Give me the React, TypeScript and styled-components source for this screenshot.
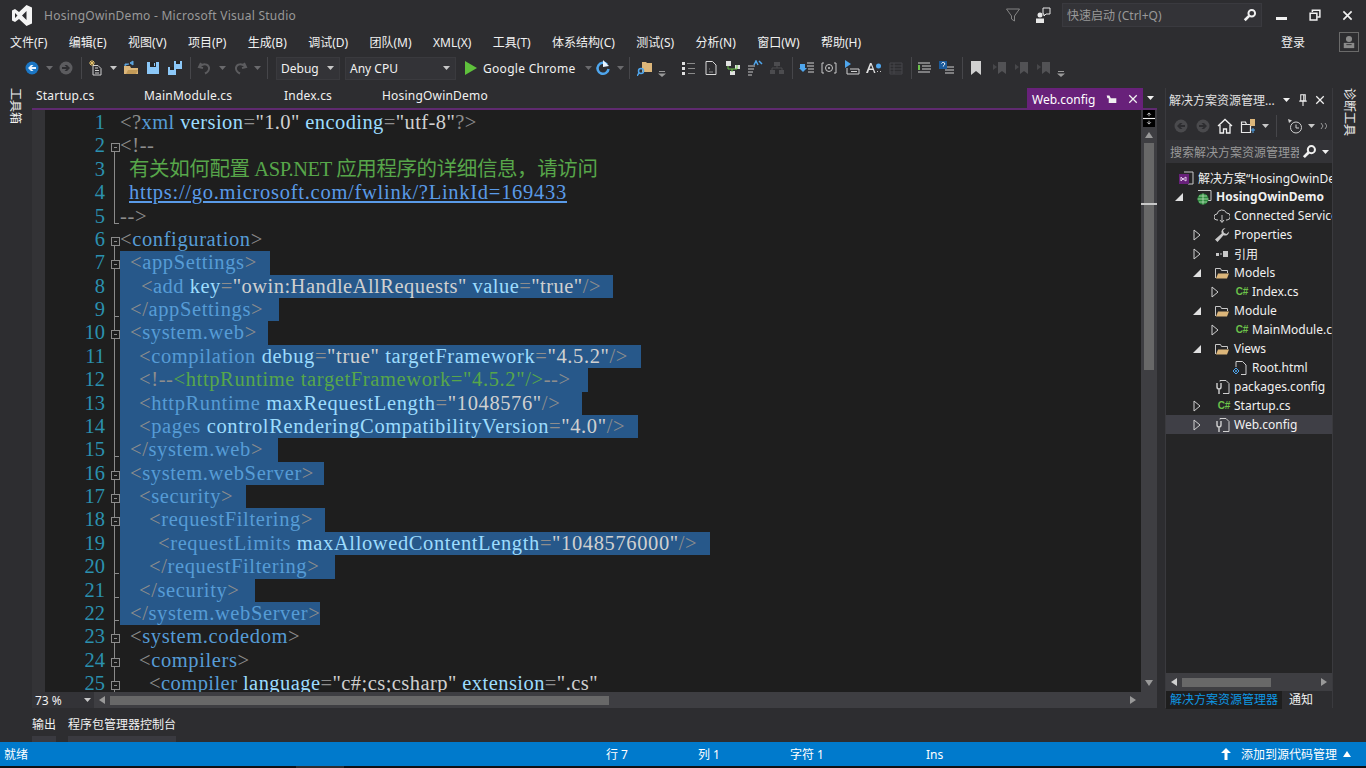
import React from 'react';
import styled, { createGlobalStyle } from 'styled-components';

const UI_FONT = `"Noto Sans", "Noto Sans CJK SC", sans-serif`;

const GlobalStyle = createGlobalStyle`
  html, body {
    margin: 0;
    padding: 0;
    background: #2d2d30;
    overflow: hidden;
  }
  * { box-sizing: border-box; }
`;

const Window = styled.div`
  width: 1366px;
  height: 768px;
  display: flex;
  flex-direction: column;
  background: #2d2d30;
  color: #f1f1f1;
  font: 12px ${UI_FONT};
  overflow: hidden;
`;

/* ---------- title bar ---------- */
const TitleBar = styled.div`
  height: 30px;
  display: flex;
  align-items: center;
  padding: 0 2px 0 12px;
`;
const TitleText = styled.span`
  margin-left: 12px;
  color: #999999;
  flex: 1;
  letter-spacing: 0.25px;
`;
const QuickLaunch = styled.div`
  width: 200px;
  height: 24px;
  margin-right: 3px;
  padding: 0 4px;
  display: flex;
  align-items: center;
  justify-content: space-between;
  background: #333337;
  border: 1px solid #3a3a3f;
  color: #999999;
`;
const WindowBtn = styled.div`
  width: 33px;
  display: flex;
  justify-content: center;
`;

/* ---------- menu ---------- */
const MenuBar = styled.div`
  height: 24px;
  display: flex;
  align-items: center;
  padding-left: 10px;
  gap: 21.4px;
`;
const MenuItem = styled.span`
  white-space: nowrap;
`;
const SignIn = styled.div`
  margin-left: auto;
  width: 85px;
  display: flex;
  align-items: center;
  justify-content: space-between;
  padding-right: 7px;
`;
const Avatar = styled.div`
  width: 20px;
  height: 20px;
  border: 1px solid #6a6a6a;
  display: flex;
  align-items: center;
  justify-content: center;
`;

/* ---------- toolbar ---------- */
const Toolbar = styled.div`
  height: 28px;
  display: flex;
  align-items: center;
  padding-left: 22px;
`;
const Cell = styled.div<{ $w: number }>`
  width: ${p => p.$w}px;
  height: 22px;
  flex: none;
  display: flex;
  align-items: center;
  justify-content: center;
`;
const Sep = styled.div`
  width: 1px;
  height: 22px;
  background: #46464a;
  flex: none;
`;
const Combo = styled.div<{ $w: number }>`
  width: ${p => p.$w}px;
  height: 23px;
  flex: none;
  display: flex;
  align-items: center;
  justify-content: space-between;
  padding: 0 5px 0 4px;
  background: #333337;
  border: 1px solid #3a3a3e;
`;
const RunText = styled.span`
  width: 99px;
  flex: none;
  white-space: nowrap;
  letter-spacing: 0.3px;
`;

/* ---------- main ---------- */
const Main = styled.div`
  height: 626px;
  display: flex;
`;
const Rail = styled.div<{ $w: number }>`
  width: ${p => p.$w}px;
  flex: none;
  padding-top: 6px;
  display: flex;
  justify-content: center;
`;
const RailLabel = styled.span`
  writing-mode: vertical-rl;
  text-orientation: sideways;
  white-space: nowrap;
  height: fit-content;
`;
const EditorColumn = styled.div`
  width: 1125px;
  flex: none;
  display: flex;
  flex-direction: column;
`;
const TabStrip = styled.div`
  height: 28px;
  flex: none;
  display: flex;
  align-items: flex-end;
  border-bottom: 2px solid #5f2a70;
`;
const DocTab = styled.span<{ $w: number }>`
  width: ${p => p.$w}px;
  flex: none;
  height: 22px;
  line-height: 19px;
  padding-left: 4px;
  color: #f1f1f1;
  white-space: nowrap;
  letter-spacing: 0.2px;
`;
const ActiveTab = styled.div`
  width: 116px;
  height: 22px;
  margin-bottom: -2px;
  padding: 0 5px;
  background: #68217a;
  display: flex;
  align-items: center;
  justify-content: space-between;
  color: #ffffff;
`;
const TabArrow = styled.div`
  width: 14px;
  height: 20px;
  display: flex;
  align-items: center;
  justify-content: center;
`;
const EditorBody = styled.div`
  height: 582px;
  flex: none;
  display: flex;
  background: #1e1e1e;
`;
const Margin = styled.div`
  width: 13px;
  flex: none;
  background: #333336;
`;
const CodeArea = styled.div`
  width: 1096px;
  flex: none;
  overflow: hidden;
  padding-top: 1px;
  font-family: "Liberation Serif", "Noto Sans CJK SC", serif;
  font-size: 20.5px;
`;
const Line = styled.div`
  height: 23.375px;
  line-height: 23.375px;
  display: flex;
  white-space: pre;
`;
const LineNumber = styled.span`
  width: 60px;
  flex: none;
  text-align: right;
  color: #2b91af;
`;
// fold column: a rule down the middle, a box where a region opens, a tick where it closes
const Fold = styled.span<{ $box?: boolean; $rule?: boolean; $start?: boolean; $tick?: boolean; $stop?: boolean }>`
  width: 15px;
  flex: none;
  position: relative;
  &::before {
    content: '';
    display: ${p => (p.$rule ? 'block' : 'none')};
    position: absolute;
    left: 9px;
    top: ${p => (p.$start ? 12 : 0)}px;
    height: ${p => (p.$stop ? 19 : p.$start ? 12 : 24)}px;
    width: 1px;
    background: #8a8a8a;
  }
  &::after {
    content: '';
    display: ${p => (p.$box || p.$tick ? 'block' : 'none')};
    position: absolute;
    left: ${p => (p.$box ? 6 : 9)}px;
    top: ${p => (p.$box ? 9 : 18)}px;
    width: ${p => (p.$box ? 7 : 5)}px;
    height: ${p => (p.$box ? 7 : 1)}px;
    border: ${p => (p.$box ? '1px solid #8a8a8a' : 'none')};
    background: ${p => (p.$box ? 'linear-gradient(#8a8a8a,#8a8a8a) center/3px 1px no-repeat #1e1e1e' : '#8a8a8a')};
  }
`;
const CodeText = styled.span<{ $indent: number; $w?: number; $ls?: number }>`
  padding-left: ${p => p.$indent}px;
  width: ${p => (p.$w ? `${p.$w}px` : 'auto')};
  background: ${p => (p.$w ? '#27588a' : 'transparent')};
  letter-spacing: ${p => p.$ls ?? 0.62}px;
`;
const tokenColors = {
  delim: '#8d8d8d',
  name: '#569cd6',
  attr: '#9cdcfe',
  value: '#d0d0d0',
  comment: '#57a64a',
  link: '#5a9be8',
};
type TokenKind = keyof typeof tokenColors;
const Token = styled.span<{ $kind: TokenKind }>`
  color: ${p => tokenColors[p.$kind]};
  text-decoration: ${p => (p.$kind === 'link' ? 'underline' : 'none')};
`;
const CjkComment = styled.span`
  color: #57a64a;
  letter-spacing: -0.4px;
`;

/* ---------- editor scrollbars ---------- */
const VScroll = styled.div`
  width: 16px;
  flex: none;
  background: #3e3e42;
  display: flex;
  flex-direction: column;
  align-items: center;
  position: relative;
`;
const Splitter = styled.div`
  width: 12px;
  height: 17px;
  margin-bottom: 3px;
  background: #000000;
  display: flex;
  align-items: center;
  justify-content: center;
`;
const VThumb = styled.div`
  width: 10px;
  height: 227px;
  margin-top: 3px;
  background: #686868;
`;
const ScrollMark = styled.div`
  position: absolute;
  left: 0;
  top: 93px;
  width: 16px;
  height: 2px;
  background: #c8c8c8;
`;
const DownArrow = styled.div`
  margin-top: auto;
  margin-bottom: 4px;
  display: flex;
`;
const HScrollRow = styled.div`
  height: 16px;
  flex: none;
  display: flex;
  align-items: center;
  background: #3e3e42;
`;
const Zoom = styled.div`
  width: 62px;
  height: 16px;
  flex: none;
  padding: 0 3px;
  background: #333337;
  display: flex;
  align-items: center;
  justify-content: space-between;
  color: #f1f1f1;
`;
const ScrollEnd = styled.div<{ $push?: boolean }>`
  width: 16px;
  flex: none;
  display: flex;
  justify-content: center;
  margin-left: ${p => (p.$push ? 'auto' : '0')};
`;
const HThumb = styled.div<{ $w: number }>`
  width: ${p => p.$w}px;
  height: 9px;
  flex: none;
  background: #686868;
`;

/* ---------- solution explorer ---------- */
const Panel = styled.div`
  width: 168px;
  margin: 6px 0 0 8px;
  flex: none;
  display: flex;
  flex-direction: column;
  border: 1px solid #3a3a3e;
  border-width: 0 1px;
`;
const PanelTitle = styled.div`
  height: 23px;
  flex: none;
  display: flex;
  align-items: center;
  padding: 0 5px 0 3px;
  white-space: nowrap;
`;
const PanelTitleText = styled.span`
  width: 110px;
  flex: none;
  color: #e0e0e0;
`;
const PanelTools = styled.div`
  height: 29px;
  flex: none;
  display: flex;
  align-items: center;
  padding-left: 4px;
`;
const SearchBox = styled.div`
  height: 23px;
  flex: none;
  display: flex;
  align-items: center;
  background: #333337;
  padding-left: 4px;
  color: #999999;
  white-space: nowrap;
`;
const SearchText = styled.span`
  width: 129px;
  flex: none;
  overflow: hidden;
`;
const Tree = styled.div`
  height: 510px;
  flex: none;
  padding-top: 5px;
  background: #252526;
  overflow: hidden;
`;
const TreeRow = styled.div<{ $depth: number; $selected?: boolean }>`
  height: 19px;
  display: flex;
  align-items: center;
  padding-left: ${p => 4 + Math.max(p.$depth - 1, 0) * 18}px;
  background: ${p => (p.$selected ? '#3f3f46' : 'transparent')};
  white-space: nowrap;
  overflow: hidden;
`;
const TreeArrow = styled.div`
  width: 18px;
  flex: none;
  display: flex;
  justify-content: center;
`;
const TreeIcon = styled.div`
  width: 28px;
  height: 16px;
  flex: none;
  padding-right: 4px;
  display: flex;
  align-items: center;
  justify-content: flex-end;
`;
const TreeLabel = styled.span<{ $bold?: boolean }>`
  font-weight: ${p => (p.$bold ? 700 : 400)};
  color: #f1f1f1;
`;
const CSharp = styled.span`
  font: 700 10px "Liberation Sans", sans-serif;
  color: #6cc24a;
  letter-spacing: -0.3px;
`;
const PanelHScroll = styled.div`
  height: 18px;
  flex: none;
  display: flex;
  align-items: center;
  background: #3e3e42;
`;
const PanelTabs = styled.div`
  height: 18px;
  flex: none;
  display: flex;
  align-items: center;
`;
const PanelTab = styled.span<{ $active?: boolean }>`
  padding: 0 4px;
  height: 18px;
  line-height: 18px;
  background: ${p => (p.$active ? '#1e1e1e' : 'transparent')};
  color: ${p => (p.$active ? '#0e97e2' : '#f1f1f1')};
  margin-right: ${p => (p.$active ? 3 : 0)}px;
`;

/* ---------- bottom ---------- */
const OutputStrip = styled.div`
  height: 34px;
  flex: none;
  padding: 8px 0 0 32px;
  display: flex;
  gap: 12px;
`;
const OutputTab = styled.span`
  height: 26px;
  line-height: 18px;
  border-bottom: 6px solid #3a3a40;
`;
const StatusBar = styled.div`
  height: 24px;
  flex: none;
  display: flex;
  align-items: center;
  padding-left: 4px;
  background: #007acc;
  color: #ffffff;
`;
const StatusCell = styled.span<{ $w: number }>`
  width: ${p => p.$w}px;
  flex: none;
  white-space: nowrap;
`;
const SourceControl = styled.div`
  margin-left: auto;
  padding-right: 14px;
  display: flex;
  align-items: center;
`;
const SourceLabel = styled.span`
  margin: 0 5px 0 10px;
`;
const BlackEdge = styled.div`
  height: 2px;
  flex: none;
  background: #101014;
`;
const EdgePatch = styled.div`
  width: 48px;
  height: 2px;
  margin-left: 296px;
  background: #2d2d30;
`;

/* ---------- icons ---------- */
const I = ({ s = 16, children }: { s?: number; children: React.ReactNode }) => (
  <svg width={s} height={s} viewBox="0 0 16 16" fill="none">{children}</svg>
);

const Drop = ({ c = '#c8c8c8' }: { c?: string }) => (
  <svg width="7" height="4" viewBox="0 0 7 4"><path d="M0 0h7L3.500 4z" fill={c} /></svg>
);
const Tri = ({ d, c = '#999999' }: { d: 'up' | 'down' | 'left' | 'right'; c?: string }) => {
  const paths = { up: 'M1 8L5 2l4 6z', down: 'M1 2h8L5 8z', left: 'M8 1v8L2 5z', right: 'M2 1v8l6-4z' };
  return <svg width="10" height="10" viewBox="0 0 10 10"><path d={paths[d]} fill={c} /></svg>;
};
const VsLogo = () => (
  <svg width="20" height="21" viewBox="0 0 20 21">
    <path fillRule="evenodd" fill="#f4f4f4" d="M14.500 0L20 2.500v16L14.500 21 7 14l-4 3-3-1.500v-10L3 4l4 3zM14.500 6l-4.500 4.500 4.500 4.500zM3 8v5l2.500-2.500z" />
  </svg>
);
const Circle = ({ bg, fg }: { bg: string; fg: string }) => (
  <I>
    <circle cx="8" cy="8" r="6.500" fill={bg} />
    <path d="M12 7v2H7.500l2 2H7L4 8l3-3h2.500l-2 2z" fill={fg} />
  </I>
);
const CircleFwd = ({ bg, fg }: { bg: string; fg: string }) => (
  <I>
    <circle cx="8" cy="8" r="6.500" fill={bg} />
    <path d="M4 7v2h4.500l-2 2H9l3-3-3-3H6.500l2 2z" fill={fg} />
  </I>
);
const NewProject = () => (
  <I>
    <path d="M5 5.500h5l3 3V15H5z" stroke="#d0d0d0" />
    <path d="M7 8h3M7 10.500h4M7 13h4" stroke="#d0d0d0" />
    <path d="M4 0v6M1 3h6M2 1l4 4M6 1L2 5" stroke="#e8c46a" />
  </I>
);
const OpenFolder = () => (
  <I>
    <path d="M1 6h6l1 2h7v6H1z" fill="#dcb67a" />
    <path d="M2 6V4h4M7 3l3-2v4z" stroke="#5da5e0" fill="#5da5e0" />
    <path d="M3 14l2-4h10l-2 4z" fill="#c39b58" />
  </I>
);
const Save = () => (
  <I>
    <path d="M2 2h12v12H2z" fill="#8cc8f8" />
    <path d="M5 2h6v5H5z" fill="#252526" />
    <path d="M9 3h1v3H9z" fill="#8cc8f8" />
  </I>
);
const SaveAll = () => (
  <I>
    <path d="M7 1h8v8H7z" fill="#8cc8f8" />
    <path d="M9 1h4v3H9z" fill="#252526" />
    <path d="M1 7h8v8H1z" fill="#8cc8f8" />
    <path d="M3 7h4v3H3z" fill="#252526" />
  </I>
);
const Undo = ({ flip }: { flip?: boolean }) => (
  <svg width="16" height="16" viewBox="0 0 16 16" fill="none" style={flip ? { transform: 'scaleX(-1)' } : undefined}>
    <path d="M4 3l-2 4 4 1M3 6.500c3-3 8-3 9 1 .5 3-2 5-4 6" stroke="#5c5c5f" strokeWidth="2" />
  </svg>
);
const Play = () => <svg width="12" height="14" viewBox="0 0 12 14"><path d="M0 0l12 7-12 7z" fill="#5fc13c" /></svg>;
const Refresh = () => (
  <I>
    <path d="M12 4.500A5.500 5.500 0 1 0 13.500 9" stroke="#4fa6ed" strokeWidth="2.500" />
    <path d="M8 0v7l6-1z" fill="#e8f4ff" />
  </I>
);
const FolderFind = () => (
  <I>
    <path d="M5 2h4l1 1h5v9H5z" fill="#dcb67a" />
    <circle cx="4" cy="11" r="2.500" stroke="#4fa6ed" strokeWidth="1.500" />
    <path d="M2 13l-2 3" stroke="#4fa6ed" strokeWidth="1.500" />
  </I>
);
const Overflow = () => (
  <svg width="8" height="18" viewBox="0 0 8 18">
    <path d="M1 12.500h6" stroke="#9a9a9a" />
    <path d="M0 14.500h8L4 18z" fill="#9a9a9a" />
  </svg>
);
const ListLines = () => (
  <I>
    <path d="M1 2h3v3H1zM1 7h3v3H1zM1 12h3v3H1z" fill="#e0e0e0" />
    <path d="M6 3.500h8M7 8.500h7M7 13.500h7" stroke="#8a8a8a" />
  </I>
);
const Page = () => (
  <I>
    <path d="M3 1.500h6.500l3.500 3.500v9.500H3z" stroke="#d8d8d8" />
    <path d="M6 9h1M6 12h4" stroke="#8a8a8a" />
  </I>
);
const Hierarchy = ({ c = '#e0e0e0', a = '#6cc24a' }: { c?: string; a?: string }) => (
  <I>
    <path d="M1 1h5v5H1zM10 5h5v4h-5zM5 11h5v4H5z" fill={c} />
    <path d="M3 6v3h9M12 9V5M7 9v3" stroke={a} />
  </I>
);
const Azn = () => (
  <I>
    <path d="M1 6h7M1 9h6M1 12h5M1 15h4" stroke="#c8c8c8" />
    <path d="M7 5l2-4 2 4M12 1l3 3" stroke="#4fa6ed" strokeWidth="1.500" />
  </I>
);
const Dim = () => (
  <I>
    <path d="M5 2h6v4H5zM1 10h5v4H1zM10 10h5v4h-5z" fill="#4c4c4f" />
    <path d="M8 6v2M3 10V8h10v2" stroke="#4c4c4f" />
  </I>
);
const Outdent = () => (
  <I>
    <path d="M8 3h7M8 6h7M9 9h6M9 12h6" stroke="#d0d0d0" />
    <path d="M1 4h5v4h2l-4 4-4-4h1z" fill="#4fa6ed" />
  </I>
);
const Squared = () => (
  <I>
    <path d="M3 3H1v10h2M13 3h2v10h-2" stroke="#c8c8c8" />
    <circle cx="8" cy="8" r="3.500" stroke="#c8c8c8" />
    <circle cx="8" cy="8" r="1" fill="#c8c8c8" />
  </I>
);
const BoxFlag = () => (
  <I>
    <path d="M1 0l6 4-6 4z" fill="#4fa6ed" />
    <path d="M3 8v6h12V9H6" stroke="#d0d0d0" />
    <path d="M7 11.500h6" stroke="#d0d0d0" />
  </I>
);
const AStar = () => (
  <I>
    <path d="M0 13L4 3h1.500l4 10H8l-1-3H3l-1 3zM3.500 8.500h3L5 5z" fill="#e0e0e0" />
    <circle cx="12.500" cy="6" r="2.500" fill="#4fa6ed" />
    <path d="M11 11h1v1h-1zM14 11h1v1h-1z" fill="#c8c8c8" />
  </I>
);
const GhostTable = () => (
  <I>
    <path d="M2 3h12v11H2zM6 3v11M2 6h12M2 9h12M2 12h12" stroke="#47474a" />
  </I>
);
const IndentLines = () => (
  <I>
    <path d="M1 3h12M5 6h9M5 9h9M1 12h12" stroke="#d0d0d0" />
    <path d="M1 5h2v5H1z" fill="#6cc24a" />
  </I>
);
const HelpLines = () => (
  <I>
    <path d="M6 7h9M6 10h9M6 13h9" stroke="#d0d0d0" />
    <rect x="0" y="1" width="8" height="8" fill="#1b5a9a" />
    <path d="M2.500 3.500C3 2 6 2 5.800 4c0 1-1.500 1-1.500 2.500" stroke="#fff" />
  </I>
);
const Bookmark = ({ c = '#d0d0d0' }: { c?: string }) => <I><path d="M3 1h10v14l-5-4-5 4z" fill={c} /></I>;
const GhostBookmark = () => (
  <I>
    <path d="M6 2h8v12l-4-3-4 3z" fill="#525255" />
    <path d="M1 4l4 3-4 3z" fill="#47474a" />
  </I>
);
const Funnel = () => <I><path d="M1.500 2h13L9.500 9v5l-3-2V9z" stroke="#848484" /></I>;
const Feedback = () => (
  <I>
    <path d="M8 1h7v6H11l-2 2V7H8z" stroke="#e8e8e8" />
    <circle cx="5" cy="8" r="2.500" fill="#e8e8e8" />
    <path d="M1 16v-4.500h8V16z" fill="#e8e8e8" />
  </I>
);
const Search = ({ s = 14 }: { s?: number }) => (
  <I s={s}>
    <circle cx="10" cy="6" r="3.800" stroke="#f1f1f1" strokeWidth="2.200" />
    <path d="M7 9l-5 5" stroke="#f1f1f1" strokeWidth="3" />
  </I>
);
const MinIcon = () => <svg width="11" height="10" viewBox="0 0 11 10"><path d="M0 7h11v3H0z" fill="#f1f1f1" /></svg>;
const RestoreIcon = () => (
  <I s={12}>
    <path d="M4.500 4V1.500h10v9H11" stroke="#f1f1f1" strokeWidth="2" />
    <path d="M1.500 5.500h9v9h-9z" stroke="#f1f1f1" strokeWidth="2" />
  </I>
);
const CloseIcon = ({ s = 11, w = 2.400 }: { s?: number; w?: number }) => (
  <I s={s}><path d="M2 2l12 12M14 2L2 14" stroke="#f1f1f1" strokeWidth={w} /></I>
);
const PinTab = () => (
  <I s={11}>
    <path d="M1 2h4l2 4h8v7H4V6H2z" fill="#f1f1f1" />
  </I>
);
const Pin = () => (
  <I s={12}>
    <path d="M5 1h6v8H5zM3 9.500h10M8 10v6M9 1v8" stroke="#f1f1f1" strokeWidth="1.400" />
  </I>
);
const AvatarIcon = () => (
  <I s={14}>
    <circle cx="8" cy="4.500" r="3.500" fill="#8a8a8a" />
    <path d="M2 15V9h12v6z" fill="#8a8a8a" />
    <path d="M5 11h6" stroke="#2d2d30" />
  </I>
);
const SplitIcon = () => (
  <I s={13}>
    <path d="M0 8h16" stroke="#f1f1f1" strokeWidth="1.500" />
    <path d="M8 1v4M8 11v4M5.500 3L8 .5 10.500 3M5.500 13l2.500 2.500 2.500-2.500" stroke="#f1f1f1" />
  </I>
);
const Home = () => (
  <I>
    <path d="M1 8l7-6.500L15 8M3 7v8h3.500v-4h3v4H13V7" stroke="#f1f1f1" strokeWidth="1.300" />
  </I>
);
const SyncFolders = () => (
  <I>
    <path d="M1.500 6.500h9v8h-9zM1.500 6.500V4h4l1 2.500" stroke="#e8e8e8" strokeWidth="1.200" />
    <path d="M10 1h5v7h-5z" fill="#dcb67a" />
    <path d="M11 12h4M13 10v5" stroke="#4fa6ed" />
  </I>
);
const Clock = () => (
  <I>
    <circle cx="9" cy="9.500" r="5.500" stroke="#d0d0d0" />
    <path d="M9 6.500v3.500h3" stroke="#d0d0d0" />
    <path d="M1 1l4 1.500L2 5z" fill="#d0d0d0" />
  </I>
);
const Chevrons = () => (
  <svg width="7" height="6" viewBox="0 0 7 6"><path d="M1 0l2 3-2 3M5 0l2 3-2 3" stroke="#9a9a9a" fill="none" /></svg>
);
const SolutionIcon = () => (
  <I>
    <path d="M6 2h9v12h-5" stroke="#c9c9c9" />
    <path d="M1 4h10v10H1z" fill="#68217a" />
    <path d="M3 7l2 2 3-2v4L5 9l-2 2z" stroke="#e0c8e8" fill="none" />
  </I>
);
const ProjectIcon = () => (
  <I>
    <path d="M2 1.500h13v10h-3" stroke="#c9c9c9" />
    <circle cx="7" cy="10" r="5.500" fill="#2d8a3e" />
    <path d="M1.500 10h11M7 4.500v11M3 7h8M3 13h8" stroke="#b8e0b8" strokeWidth=".8" />
  </I>
);
const CloudIcon = () => (
  <I>
    <path d="M4 12H3a3 3 0 0 1 0-6 5 5 0 0 1 9.500-1A3.500 3.500 0 0 1 13 12h-1" stroke="#c8c8c8" />
    <path d="M8 7v7M6 12l2 2.500 2-2.500" stroke="#c8c8c8" />
  </I>
);
const Wrench = () => (
  <I>
    <path d="M15 4.500a4 4 0 0 1-5.500 3.800L3.500 15 1 12.500l6.700-6A4 4 0 0 1 11.500 1L9 3.500 10 6l2.500 1z" fill="#c8c8c8" />
  </I>
);
const RefsIcon = () => (
  <I>
    <path d="M2 7h3v3H2z" fill="#c8c8c8" />
    <path d="M6 8h2" stroke="#c8c8c8" />
    <path d="M9 5h5v6H9z" fill="#c8c8c8" />
  </I>
);
const FolderOpen = () => (
  <I>
    <path d="M1.500 13V3.500h5l1 2h6V8" stroke="#c8c8c8" />
    <path d="M2 13.500l2-5h11l-2 5z" fill="#dcb67a" />
  </I>
);
const HtmlIcon = () => (
  <I>
    <path d="M4 7V1.500h6.500L14 5v9.500H9" stroke="#d0d0d0" />
    <path d="M1 11l3-3 3 3-3 3z" stroke="#4fa6ed" fill="none" />
    <circle cx="4" cy="11" r="1" fill="#4fa6ed" />
  </I>
);
const ConfigIcon = () => (
  <I>
    <path d="M6 2.500V1.500h6L15 4.500v10H9" stroke="#d0d0d0" />
    <path d="M3 4v4a2 2 0 0 0 4 0V4M5 10v5" stroke="#d0d0d0" strokeWidth="1.400" />
  </I>
);
const ArrowClosed = () => (
  <svg width="8" height="12" viewBox="0 0 8 12"><path d="M1 1l6 5-6 5z" stroke="#d0d0d0" fill="none" /></svg>
);
const ArrowOpen = () => (
  <svg width="8" height="8" viewBox="0 0 8 8"><path d="M8 0v8H0z" fill="#e0e0e0" /></svg>
);
const UpArrow = () => (
  <svg width="10" height="12" viewBox="0 0 10 12"><path d="M5 0l5 5H6.500v7h-3V5H0z" fill="#ffffff" /></svg>
);

/* ---------- data ---------- */
const menus = ['文件(F)', '编辑(E)', '视图(V)', '项目(P)', '生成(B)', '调试(D)', '团队(M)', 'XML(X)', '工具(T)', '体系结构(C)', '测试(S)', '分析(N)', '窗口(W)', '帮助(H)'];

const tabs = [
  { name: 'Startup.cs', w: 108 },
  { name: 'MainModule.cs', w: 140 },
  { name: 'Index.cs', w: 98 },
  { name: 'HosingOwinDemo', w: 649 },
];

interface CodeLine {
  src: string;
  indent: number;
  sel?: number;
  ls?: number;
  fold?: 'box' | 'line' | 'end';
  kind?: 'cjk' | 'link' | 'commented';
}

const code: CodeLine[] = [
  { src: '<?xml version="1.0" encoding="utf-8"?>', indent: 0, ls: 0.41 },
  { src: '<!--', indent: 0, fold: 'box' },
  { src: '有关如何配置 ASP.NET 应用程序的详细信息，请访问', indent: 9, fold: 'line', kind: 'cjk' },
  { src: 'https://go.microsoft.com/fwlink/?LinkId=169433', indent: 9, fold: 'line', kind: 'link', ls: 0.73 },
  { src: '-->', indent: 0, fold: 'end' },
  { src: '<configuration>', indent: 0, fold: 'box' },
  { src: '<appSettings>', indent: 10, sel: 150, fold: 'box' },
  { src: '<add key="owin:HandleAllRequests" value="true"/>', indent: 21, sel: 493, fold: 'line', ls: 0.47 },
  { src: '</appSettings>', indent: 10, sel: 159, fold: 'end' },
  { src: '<system.web>', indent: 10, sel: 148, fold: 'box' },
  { src: '<compilation debug="true" targetFramework="4.5.2"/>', indent: 19, sel: 521, fold: 'line' },
  { src: '<httpRuntime targetFramework="4.5.2"/>', indent: 19, sel: 468, fold: 'line', kind: 'commented' },
  { src: '<httpRuntime maxRequestLength="1048576"/>', indent: 19, sel: 462, fold: 'line' },
  { src: '<pages controlRenderingCompatibilityVersion="4.0"/>', indent: 19, sel: 518, fold: 'line' },
  { src: '</system.web>', indent: 10, sel: 158, fold: 'end' },
  { src: '<system.webServer>', indent: 10, sel: 204, fold: 'box' },
  { src: '<security>', indent: 19, sel: 126, fold: 'box' },
  { src: '<requestFiltering>', indent: 29, sel: 205, fold: 'box' },
  { src: '<requestLimits maxAllowedContentLength="1048576000"/>', indent: 38, sel: 590, fold: 'line' },
  { src: '</requestFiltering>', indent: 29, sel: 215, fold: 'end' },
  { src: '</security>', indent: 19, sel: 135, fold: 'end' },
  { src: '</system.webServer>', indent: 10, sel: 200, fold: 'end' },
  { src: '<system.codedom>', indent: 10, fold: 'box' },
  { src: '<compilers>', indent: 19, fold: 'box' },
  { src: '<compiler language="c#;cs;csharp" extension=".cs"', indent: 29, fold: 'box', ls: 0.44 },
];

// splits one xml line into coloured pieces
const tokenize = (src: string) => {
  const out: { kind: TokenKind; text: string }[] = [];
  const re = /<\?|\?>|<\/|\/>|<!--|-->|<|>|=|"[^"]*"|\s+|[^\s<>=?"/]+/g;
  let afterOpen = false;
  for (const m of src.match(re) ?? []) {
    if (/^(<\?|\?>|<\/|\/>|<!--|-->|<|>|=)$/.test(m)) {
      out.push({ kind: 'delim', text: m });
      afterOpen = m === '<' || m === '</' || m === '<?';
    } else if (m.startsWith('"')) {
      out.push({ kind: 'value', text: m });
    } else if (/^\s+$/.test(m)) {
      out.push({ kind: 'attr', text: m });
    } else {
      out.push({ kind: afterOpen ? 'name' : 'attr', text: m });
      afterOpen = false;
    }
  }
  return out;
};

const renderCode = (line: CodeLine) => {
  if (line.kind === 'cjk') return <CjkComment>{line.src}</CjkComment>;
  if (line.kind === 'link') return <Token $kind="link">{line.src}</Token>;
  if (line.kind === 'commented') {
    return (
      <>
        <Token $kind="delim">{'<!--'}</Token>
        <Token $kind="comment">{line.src}</Token>
        <Token $kind="delim">{'-->'}</Token>
      </>
    );
  }
  return tokenize(line.src).map((t, i) => (
    <Token key={i} $kind={t.kind}>{t.text}</Token>
  ));
};

type TreeItem = {
  depth: number;
  label: string;
  arrow?: 'open' | 'closed';
  icon: React.ReactNode;
  bold?: boolean;
  selected?: boolean;
};

const treeItems: TreeItem[] = [
  { depth: 0, label: '解决方案“HosingOwinDemo”', icon: <SolutionIcon /> },
  { depth: 1, label: 'HosingOwinDemo', arrow: 'open', icon: <ProjectIcon />, bold: true },
  { depth: 2, label: 'Connected Services', icon: <CloudIcon /> },
  { depth: 2, label: 'Properties', arrow: 'closed', icon: <Wrench /> },
  { depth: 2, label: '引用', arrow: 'closed', icon: <RefsIcon /> },
  { depth: 2, label: 'Models', arrow: 'open', icon: <FolderOpen /> },
  { depth: 3, label: 'Index.cs', arrow: 'closed', icon: <CSharp>C#</CSharp> },
  { depth: 2, label: 'Module', arrow: 'open', icon: <FolderOpen /> },
  { depth: 3, label: 'MainModule.cs', arrow: 'closed', icon: <CSharp>C#</CSharp> },
  { depth: 2, label: 'Views', arrow: 'open', icon: <FolderOpen /> },
  { depth: 3, label: 'Root.html', icon: <HtmlIcon /> },
  { depth: 2, label: 'packages.config', icon: <ConfigIcon /> },
  { depth: 2, label: 'Startup.cs', arrow: 'closed', icon: <CSharp>C#</CSharp> },
  { depth: 2, label: 'Web.config', arrow: 'closed', icon: <ConfigIcon />, selected: true },
];

const DIM = '#6a6a6d';

export default function App() {
  return (
    <Window>
      <GlobalStyle />
      <TitleBar>
        <VsLogo />
        <TitleText>HosingOwinDemo - Microsoft Visual Studio</TitleText>
        <Cell $w={22}><Funnel /></Cell>
        <Cell $w={38}><Feedback /></Cell>
        <QuickLaunch>
          快速启动 (Ctrl+Q)
          <Search />
        </QuickLaunch>
        <WindowBtn><MinIcon /></WindowBtn>
        <WindowBtn><RestoreIcon /></WindowBtn>
        <WindowBtn><CloseIcon /></WindowBtn>
      </TitleBar>

      <MenuBar>
        {menus.map(m => <MenuItem key={m}>{m}</MenuItem>)}
        <SignIn>
          登录
          <Avatar><AvatarIcon /></Avatar>
        </SignIn>
      </MenuBar>

      <Toolbar>
        <Cell $w={20}><Circle bg="#1b76c4" fg="#e8f4ff" /></Cell>
        <Cell $w={14}><Drop c={DIM} /></Cell>
        <Cell $w={20}><CircleFwd bg="#5c5c5f" fg="#2d2d30" /></Cell>
        <Cell $w={5} />
        <Sep />
        <Cell $w={4} />
        <Cell $w={20}><NewProject /></Cell>
        <Cell $w={14}><Drop /></Cell>
        <Cell $w={21}><OpenFolder /></Cell>
        <Cell $w={23}><Save /></Cell>
        <Cell $w={22}><SaveAll /></Cell>
        <Cell $w={4} />
        <Sep />
        <Cell $w={3} />
        <Cell $w={22}><Undo /></Cell>
        <Cell $w={13}><Drop c={DIM} /></Cell>
        <Cell $w={22}><Undo flip /></Cell>
        <Cell $w={13}><Drop c={DIM} /></Cell>
        <Cell $w={3} />
        <Sep />
        <Cell $w={8} />
        <Combo $w={64}>Debug<Drop /></Combo>
        <Cell $w={5} />
        <Combo $w={111}>Any CPU<Drop /></Combo>
        <Cell $w={5} />
        <Cell $w={20}><Play /></Cell>
        <Cell $w={2} />
        <RunText>Google Chrome</RunText>
        <Cell $w={12}><Drop c={DIM} /></Cell>
        <Cell $w={18}><Refresh /></Cell>
        <Cell $w={17}><Drop c={DIM} /></Cell>
        <Sep />
        <Cell $w={5} />
        <Cell $w={20}><FolderFind /></Cell>
        <Cell $w={14}><Overflow /></Cell>
        <Cell $w={9} />
        <Cell $w={22}><ListLines /></Cell>
        <Cell $w={22}><Page /></Cell>
        <Cell $w={22}><Hierarchy /></Cell>
        <Cell $w={22}><Azn /></Cell>
        <Cell $w={22}><Dim /></Cell>
        <Cell $w={4} />
        <Sep />
        <Cell $w={4} />
        <Cell $w={20}><Outdent /></Cell>
        <Cell $w={23}><Squared /></Cell>
        <Cell $w={23}><BoxFlag /></Cell>
        <Cell $w={21}><AStar /></Cell>
        <Cell $w={23}><GhostTable /></Cell>
        <Cell $w={4} />
        <Sep />
        <Cell $w={2} />
        <Cell $w={22}><IndentLines /></Cell>
        <Cell $w={22}><HelpLines /></Cell>
        <Cell $w={4} />
        <Sep />
        <Cell $w={3} />
        <Cell $w={20}><Bookmark /></Cell>
        <Cell $w={3} />
        <Cell $w={22}><GhostBookmark /></Cell>
        <Cell $w={22}><GhostBookmark /></Cell>
        <Cell $w={22}><GhostBookmark /></Cell>
        <Cell $w={12}><Overflow /></Cell>
      </Toolbar>

      <Main>
        <Rail $w={32}><RailLabel>工具箱</RailLabel></Rail>
        <EditorColumn>
          <TabStrip>
            {tabs.map(t => <DocTab key={t.name} $w={t.w}>{t.name}</DocTab>)}
            <ActiveTab>
              Web.config
              <PinTab />
              <CloseIcon s={10} w={2} />
            </ActiveTab>
            <TabArrow><Drop c="#f1f1f1" /></TabArrow>
          </TabStrip>
          <EditorBody>
            <Margin />
            <CodeArea>
              {code.map((line, i) => (
                <Line key={i}>
                  <LineNumber>{i + 1}</LineNumber>
                  <Fold
                    $box={line.fold === 'box'}
                    $tick={line.fold === 'end'}
                    $rule={!!line.fold}
                    $start={i === 1 || i === 5}
                    $stop={i === 4}
                  />
                  <CodeText $indent={line.indent} $w={line.sel} $ls={line.ls}>{renderCode(line)}</CodeText>
                </Line>
              ))}
            </CodeArea>
            <VScroll>
              <Splitter><SplitIcon /></Splitter>
              <Tri d="up" />
              <VThumb />
              <ScrollMark />
              <DownArrow><Tri d="down" /></DownArrow>
            </VScroll>
          </EditorBody>
          <HScrollRow>
            <Zoom>73 %<Drop /></Zoom>
            <ScrollEnd><Tri d="left" /></ScrollEnd>
            <HThumb $w={499} />
            <ScrollEnd $push><Tri d="right" /></ScrollEnd>
            <Cell $w={16} />
          </HScrollRow>
        </EditorColumn>

        <Panel>
          <PanelTitle>
            <PanelTitleText>解决方案资源管理...</PanelTitleText>
            <Cell $w={14}><Drop c="#f1f1f1" /></Cell>
            <Cell $w={20}><Pin /></Cell>
            <Cell $w={14}><CloseIcon s={10} w={2} /></Cell>
          </PanelTitle>
          <PanelTools>
            <Cell $w={22}><Circle bg="#4a4a4d" fg="#2d2d30" /></Cell>
            <Cell $w={22}><CircleFwd bg="#4a4a4d" fg="#2d2d30" /></Cell>
            <Cell $w={22}><Home /></Cell>
            <Cell $w={24}><SyncFolders /></Cell>
            <Cell $w={10}><Drop /></Cell>
            <Cell $w={6} />
            <Sep />
            <Cell $w={7} />
            <Cell $w={22}><Clock /></Cell>
            <Cell $w={10}><Drop /></Cell>
            <Cell $w={14}><Chevrons /></Cell>
          </PanelTools>
          <SearchBox>
            <SearchText>搜索解决方案资源管理器</SearchText>
            <Cell $w={20}><Search s={15} /></Cell>
            <Cell $w={12}><Drop c="#f1f1f1" /></Cell>
          </SearchBox>
          <Tree>
            {treeItems.map(t => (
              <TreeRow key={t.label} $depth={t.depth} $selected={t.selected}>
                {t.depth > 0 && (
                  <TreeArrow>
                    {t.arrow === 'open' && <ArrowOpen />}
                    {t.arrow === 'closed' && <ArrowClosed />}
                  </TreeArrow>
                )}
                <TreeIcon>{t.icon}</TreeIcon>
                <TreeLabel $bold={t.bold}>{t.label}</TreeLabel>
              </TreeRow>
            ))}
          </Tree>
          <PanelHScroll>
            <ScrollEnd><Tri d="left" c="#d0d0d0" /></ScrollEnd>
            <HThumb $w={89} />
            <ScrollEnd $push><Tri d="right" c="#999999" /></ScrollEnd>
          </PanelHScroll>
          <PanelTabs>
            <PanelTab $active>解决方案资源管理器</PanelTab>
            <PanelTab>通知</PanelTab>
          </PanelTabs>
        </Panel>
        <Rail $w={33}><RailLabel>诊断工具</RailLabel></Rail>
      </Main>

      <OutputStrip>
        <OutputTab>输出</OutputTab>
        <OutputTab>程序包管理器控制台</OutputTab>
      </OutputStrip>

      <StatusBar>
        <StatusCell $w={602}>就绪</StatusCell>
        <StatusCell $w={92}>行 7</StatusCell>
        <StatusCell $w={92}>列 1</StatusCell>
        <StatusCell $w={136}>字符 1</StatusCell>
        <StatusCell $w={40}>Ins</StatusCell>
        <SourceControl>
          <UpArrow />
          <SourceLabel>添加到源代码管理</SourceLabel>
          <Tri d="up" c="#ffffff" />
        </SourceControl>
      </StatusBar>
      <BlackEdge><EdgePatch /></BlackEdge>
    </Window>
  );
}
